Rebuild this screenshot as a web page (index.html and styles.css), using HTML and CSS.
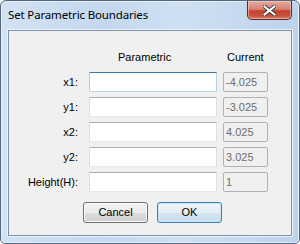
FILE: index.html
```
<!DOCTYPE HTML>
<html>
  <head>
    <meta charset="UTF-8">
    <link rel="stylesheet" href="styles.css">
  </head>
  <body>
    <div class="window">
      <div class="titlebar">
        <span class="title">Set Parametric Boundaries</span>
        <div class="closebtn">
          <svg width="13" height="11" viewBox="0 0 13 11">
            <path d="M1.5 1.5 L11.5 9.5 M11.5 1.5 L1.5 9.5" stroke="#3b3b3b" stroke-width="4" stroke-linecap="square"/>
            <path d="M1.5 1.5 L11.5 9.5 M11.5 1.5 L1.5 9.5" stroke="#ffffff" stroke-width="2" stroke-linecap="square"/>
          </svg>
        </div>
      </div>
      <div class="client">
        <div class="row header">
          <span class="label"></span>
          <span class="colhead param">Parametric</span>
          <span class="colhead cur">Current</span>
        </div>
        <div class="row">
          <span class="label">x1:</span>
          <div class="textbox focus"></div>
          <div class="current">-4.025</div>
        </div>
        <div class="row">
          <span class="label">y1:</span>
          <div class="textbox"></div>
          <div class="current">-3.025</div>
        </div>
        <div class="row">
          <span class="label">x2:</span>
          <div class="textbox"></div>
          <div class="current">4.025</div>
        </div>
        <div class="row">
          <span class="label">y2:</span>
          <div class="textbox"></div>
          <div class="current">3.025</div>
        </div>
        <div class="row">
          <span class="label">Height(H):</span>
          <div class="textbox"></div>
          <div class="current">1</div>
        </div>
        <div class="buttons">
          <div class="btn">Cancel</div>
          <div class="btn default">OK</div>
        </div>
      </div>
    </div>
  </body>
</html>
```

FILE: styles.css
```
body {
  margin: 0;
  background: #ffffff;
}
.window {
  width: 300px;
  height: 244px;
  box-sizing: border-box;
  border: 1px solid #56677c;
  border-radius: 6px 6px 5px 5px;
  background: linear-gradient(to right, #d3e2f3 0%, #c3d8ef 35%, #cfe0f2 60%, #bcd3ec 100%);
  box-shadow: inset 0 0 0 1px #e4eef9;
  padding: 0 7px 7px 7px;
  display: flex;
  flex-direction: column;
}
.titlebar {
  height: 29px;
  display: flex;
  align-items: flex-start;
  justify-content: space-between;
}
.title {
  font-family: "Noto Sans", sans-serif;
  font-size: 11.5px;
  color: #000000;
  margin-top: 6px;
  letter-spacing: -0.15px;
}
.closebtn {
  width: 45px;
  height: 19px;
  box-sizing: border-box;
  border: 1px solid #5b2a27;
  border-top: none;
  border-radius: 0 0 5px 5px;
  background: linear-gradient(#e6a89f 0%, #d88474 45%, #c44330 55%, #c8503c 80%, #d57a66 100%);
  box-shadow: inset 0 0 0 1px rgba(255, 220, 210, 0.5);
  display: flex;
  align-items: center;
  justify-content: center;
}
.client {
  flex: 1;
  background: #f0f0f0;
  border: 1px solid #7f92a8;
  box-shadow: 0 0 0 1px #e9f1fa;
  font-family: "Liberation Sans", Arial, sans-serif;
  font-size: 11px;
  color: #000000;
  padding-top: 19px;
}
.row {
  display: flex;
  align-items: center;
  height: 20px;
  margin-bottom: 5px;
}
.row.header {
  height: 13px;
  margin-bottom: 9px;
}
.label {
  width: 69px;
  text-align: right;
  margin-right: 11px;
  flex-shrink: 0;
}
.colhead.param {
  width: 128px;
  box-sizing: border-box;
  padding-left: 29px;
}
.colhead.cur {
  margin-left: 10px;
}
.textbox {
  width: 128px;
  height: 20px;
  box-sizing: border-box;
  background: #ffffff;
  border: 1px solid #dbdfe6;
  border-top-color: #abadb3;
  border-bottom-color: #e3e9ef;
  border-radius: 1px;
}
.textbox.focus {
  border-color: #b5cfe7;
  border-top-color: #3d7bad;
  border-bottom-color: #b7d9ed;
}
.current {
  width: 45px;
  height: 20px;
  margin-left: 6px;
  box-sizing: border-box;
  border: 1px solid #aeb2b5;
  border-radius: 2px;
  background: #f0f0f0;
  color: #6d6d6d;
  padding-left: 2px;
  line-height: 18px;
}
.buttons {
  display: flex;
  gap: 9px;
  padding-left: 74px;
  margin-top: 10px;
}
.btn {
  width: 65px;
  height: 21px;
  box-sizing: border-box;
  border: 1px solid #707070;
  border-radius: 3px;
  background: linear-gradient(#f2f2f2 0%, #ebebeb 50%, #dddddd 50%, #cfcfcf 100%);
  box-shadow: inset 0 0 0 1px #fcfcfc;
  text-align: center;
  line-height: 19px;
}
.btn.default {
  border-color: #3c7fb1;
  background: linear-gradient(#eef5fa 0%, #e4eef6 50%, #d5e5f1 50%, #c8dceb 100%);
  box-shadow: inset 0 0 0 1px #c8e6f8;
}
```
